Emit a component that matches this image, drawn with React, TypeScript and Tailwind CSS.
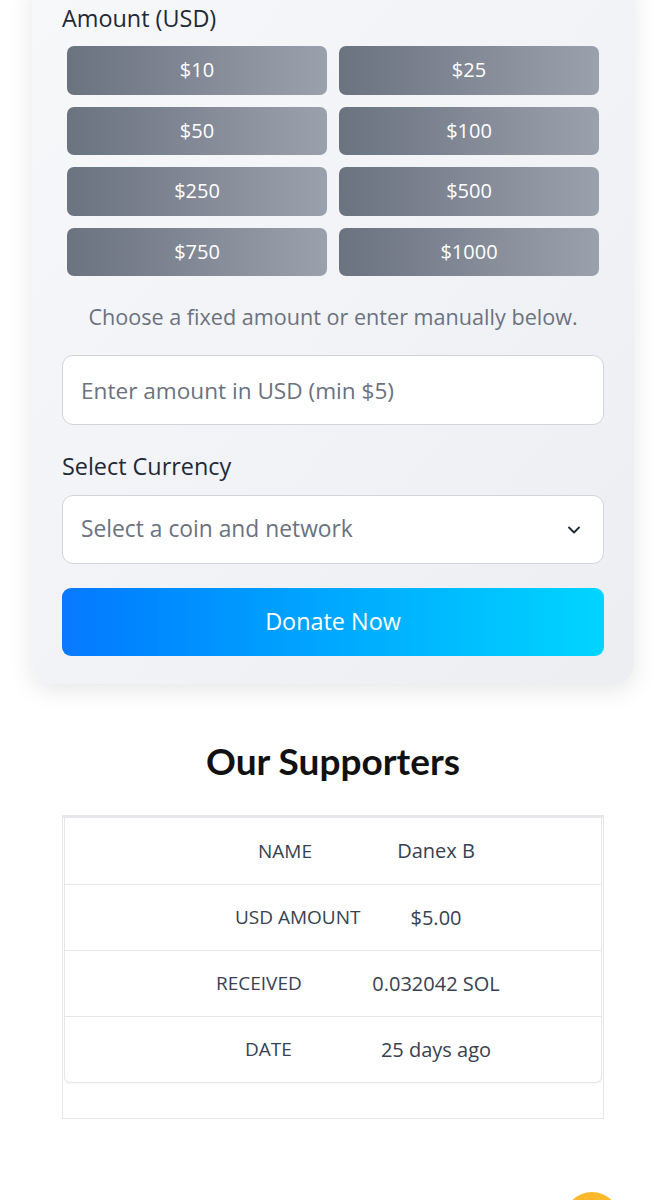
import { ChevronDown } from 'lucide-react';

const amounts = ['$10', '$25', '$50', '$100', '$250', '$500', '$750', '$1000'];

const supporterRows = [
  { label: 'NAME', value: 'Danex B', labelClass: 'pl-[193px]' },
  { label: 'USD AMOUNT', value: '$5.00', labelClass: 'pl-[170px]' },
  { label: 'RECEIVED', value: '0.032042 SOL', labelClass: 'pl-[151px]' },
  { label: 'DATE', value: '25 days ago', labelClass: 'pl-[180px]' },
];

function DonateCard() {
  return (
    <div className="mx-[32px] -mt-[24px] rounded-[20px] bg-gradient-to-br from-[#f7f8fa] to-[#eceef2] px-[30px] pt-[27px] pb-[28px] shadow-[0_6px_24px_rgba(0,0,0,0.10)]">
      <div className="text-[23.4px] leading-[30px] font-medium text-[#1f2937]">Amount (USD)</div>

      <div className="mt-[13px] grid grid-cols-2 gap-x-[12px] gap-y-[12px] px-[5px]">
        {amounts.map((a) => (
          <button
            key={a}
            type="button"
            className="h-[48.5px] rounded-[7px] bg-gradient-to-r from-[#6b7280] to-[#9ba1ac] text-[20px] font-medium text-white"
          >
            {a}
          </button>
        ))}
      </div>

      <p className="mt-[26px] text-center text-[21.6px] leading-[30px] text-[#6b7280]">
        Choose a fixed amount or enter manually below.
      </p>

      <input
        type="text"
        placeholder="Enter amount in USD (min $5)"
        className="mt-[23px] block h-[70px] w-full rounded-[11px] border border-[#d1d5db] bg-white px-[18px] text-[22.6px] text-[#374151] placeholder:text-[#6b7280] outline-none"
      />

      <div className="mt-[26px] text-[23.4px] leading-[30px] font-medium text-[#1f2937]">Select Currency</div>

      <div className="mt-[14px] flex h-[69px] items-center justify-between rounded-[11px] border border-[#d1d5db] bg-white pl-[18px] pr-[19px]">
        <span className="text-[22.8px] text-[#6b7280]">Select a coin and network</span>
        <ChevronDown className="h-[20px] w-[20px] text-[#1f2937]" strokeWidth={2.2} />
      </div>

      <button
        type="button"
        className="mt-[24px] h-[68px] w-full rounded-[9px] bg-gradient-to-r from-[#0a78ff] to-[#00d5ff] text-[23.4px] font-medium text-white"
      >
        Donate Now
      </button>
    </div>
  );
}

function Supporters() {
  return (
    <div className="mt-[53px]">
      <h2 className="text-center text-[37px] leading-[48px] font-bold text-[#111111] [font-family:Lato,'Open_Sans',sans-serif]">
        Our Supporters
      </h2>

      <div className="mx-[62px] mt-[30px] h-[304px] border border-[#e5e7eb] border-t-[3px]">
        <div className="mx-[1px] rounded-b-[6px] border-x border-b border-[#e5e7eb] bg-white shadow-[0_1px_2px_rgba(0,0,0,0.04)]">
          {supporterRows.map((r, i) => (
            <div
              key={r.label}
              className={`grid h-[66px] grid-cols-[271px_200px] items-center ${
                i > 0 ? 'border-t border-[#e5e7eb]' : ''
              }`}
            >
              <span className={`${r.labelClass} text-[19px] text-[#374151] whitespace-nowrap`}>{r.label}</span>
              <span className="text-center text-[20px] text-[#374151] whitespace-nowrap">{r.value}</span>
            </div>
          ))}
        </div>
      </div>
    </div>
  );
}

export default function App() {
  return (
    <div className="relative h-[1200px] overflow-hidden bg-white [font-family:'Open_Sans','Noto_Sans',sans-serif]">
      <DonateCard />
      <Supporters />
      <div className="absolute left-[564px] top-[1192px] h-[56px] w-[56px] rounded-full bg-[#fbb82a]" />
    </div>
  );
}
